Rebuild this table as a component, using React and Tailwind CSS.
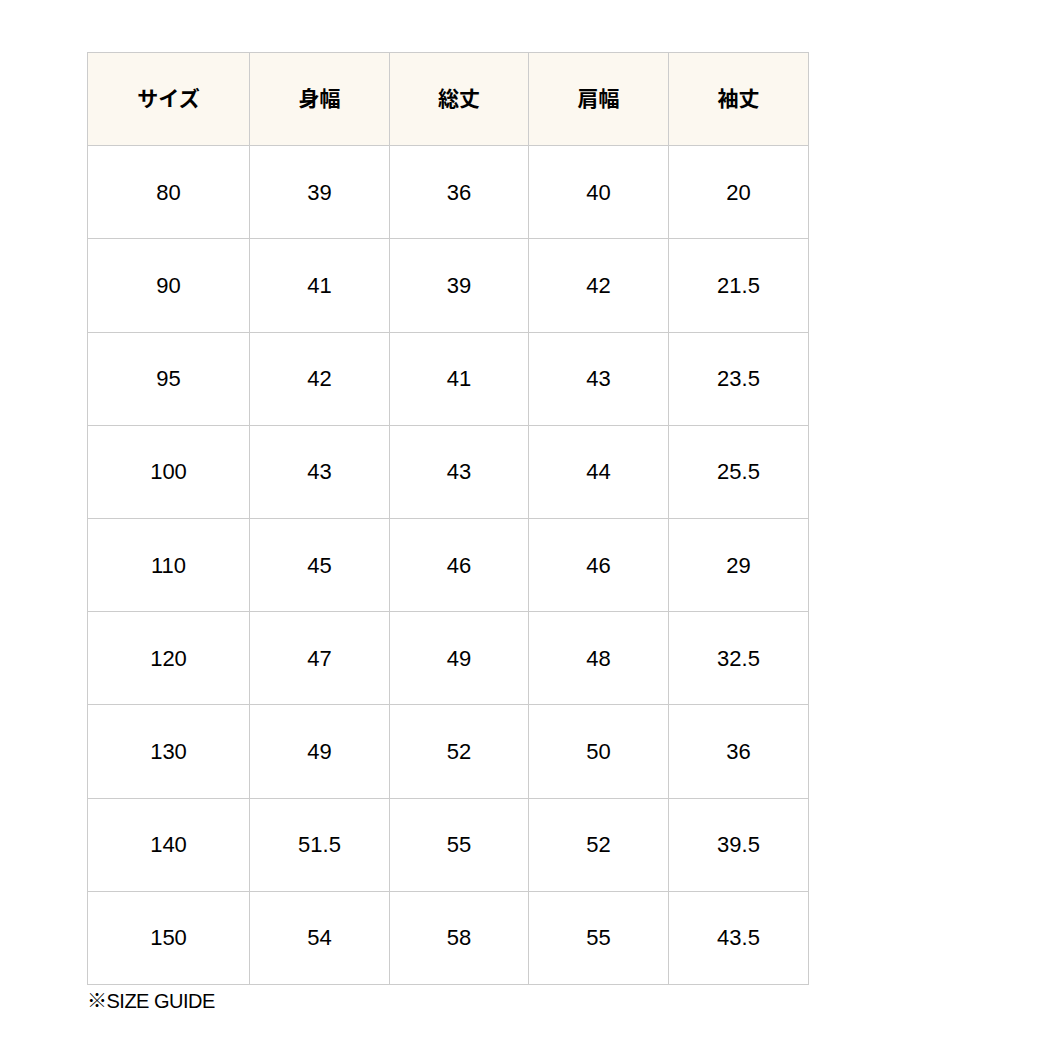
const HEAD = ['サイズ', '身幅', '総丈', '肩幅', '袖丈'];
const ROWS = [
  ['80', '39', '36', '40', '20'],
  ['90', '41', '39', '42', '21.5'],
  ['95', '42', '41', '43', '23.5'],
  ['100', '43', '43', '44', '25.5'],
  ['110', '45', '46', '46', '29'],
  ['120', '47', '49', '48', '32.5'],
  ['130', '49', '52', '50', '36'],
  ['140', '51.5', '55', '52', '39.5'],
  ['150', '54', '58', '55', '43.5'],
];
const WIDTHS = ['w-[162px]', 'w-[140px]', 'w-[139px]', 'w-[140px]', 'w-[140px]'];

export default function App() {
  return (
    <div className="min-h-screen bg-white pl-[87px] pt-[52px] text-black [font-family:'Liberation_Sans','Noto_Sans_CJK_JP',sans-serif]">
      <table className="border-collapse table-fixed w-[722px]">
        <thead>
          <tr>
            {HEAD.map((h, i) => (
              <th
                key={h}
                className={`${WIDTHS[i]} h-[93.2px] border border-[#cccccc] bg-[#fcf8f0] text-center text-[21px] font-bold`}
              >
                {h}
              </th>
            ))}
          </tr>
        </thead>
        <tbody>
          {ROWS.map((r) => (
            <tr key={r[0]}>
              {r.map((v, i) => (
                <td key={i} className="h-[93.2px] border border-[#cccccc] text-center text-[22px] font-normal">
                  {v}
                </td>
              ))}
            </tr>
          ))}
        </tbody>
      </table>
      <p className="mt-[2px] text-[20px] leading-[28px] tracking-[-0.5px]">※SIZE GUIDE</p>
    </div>
  );
}
